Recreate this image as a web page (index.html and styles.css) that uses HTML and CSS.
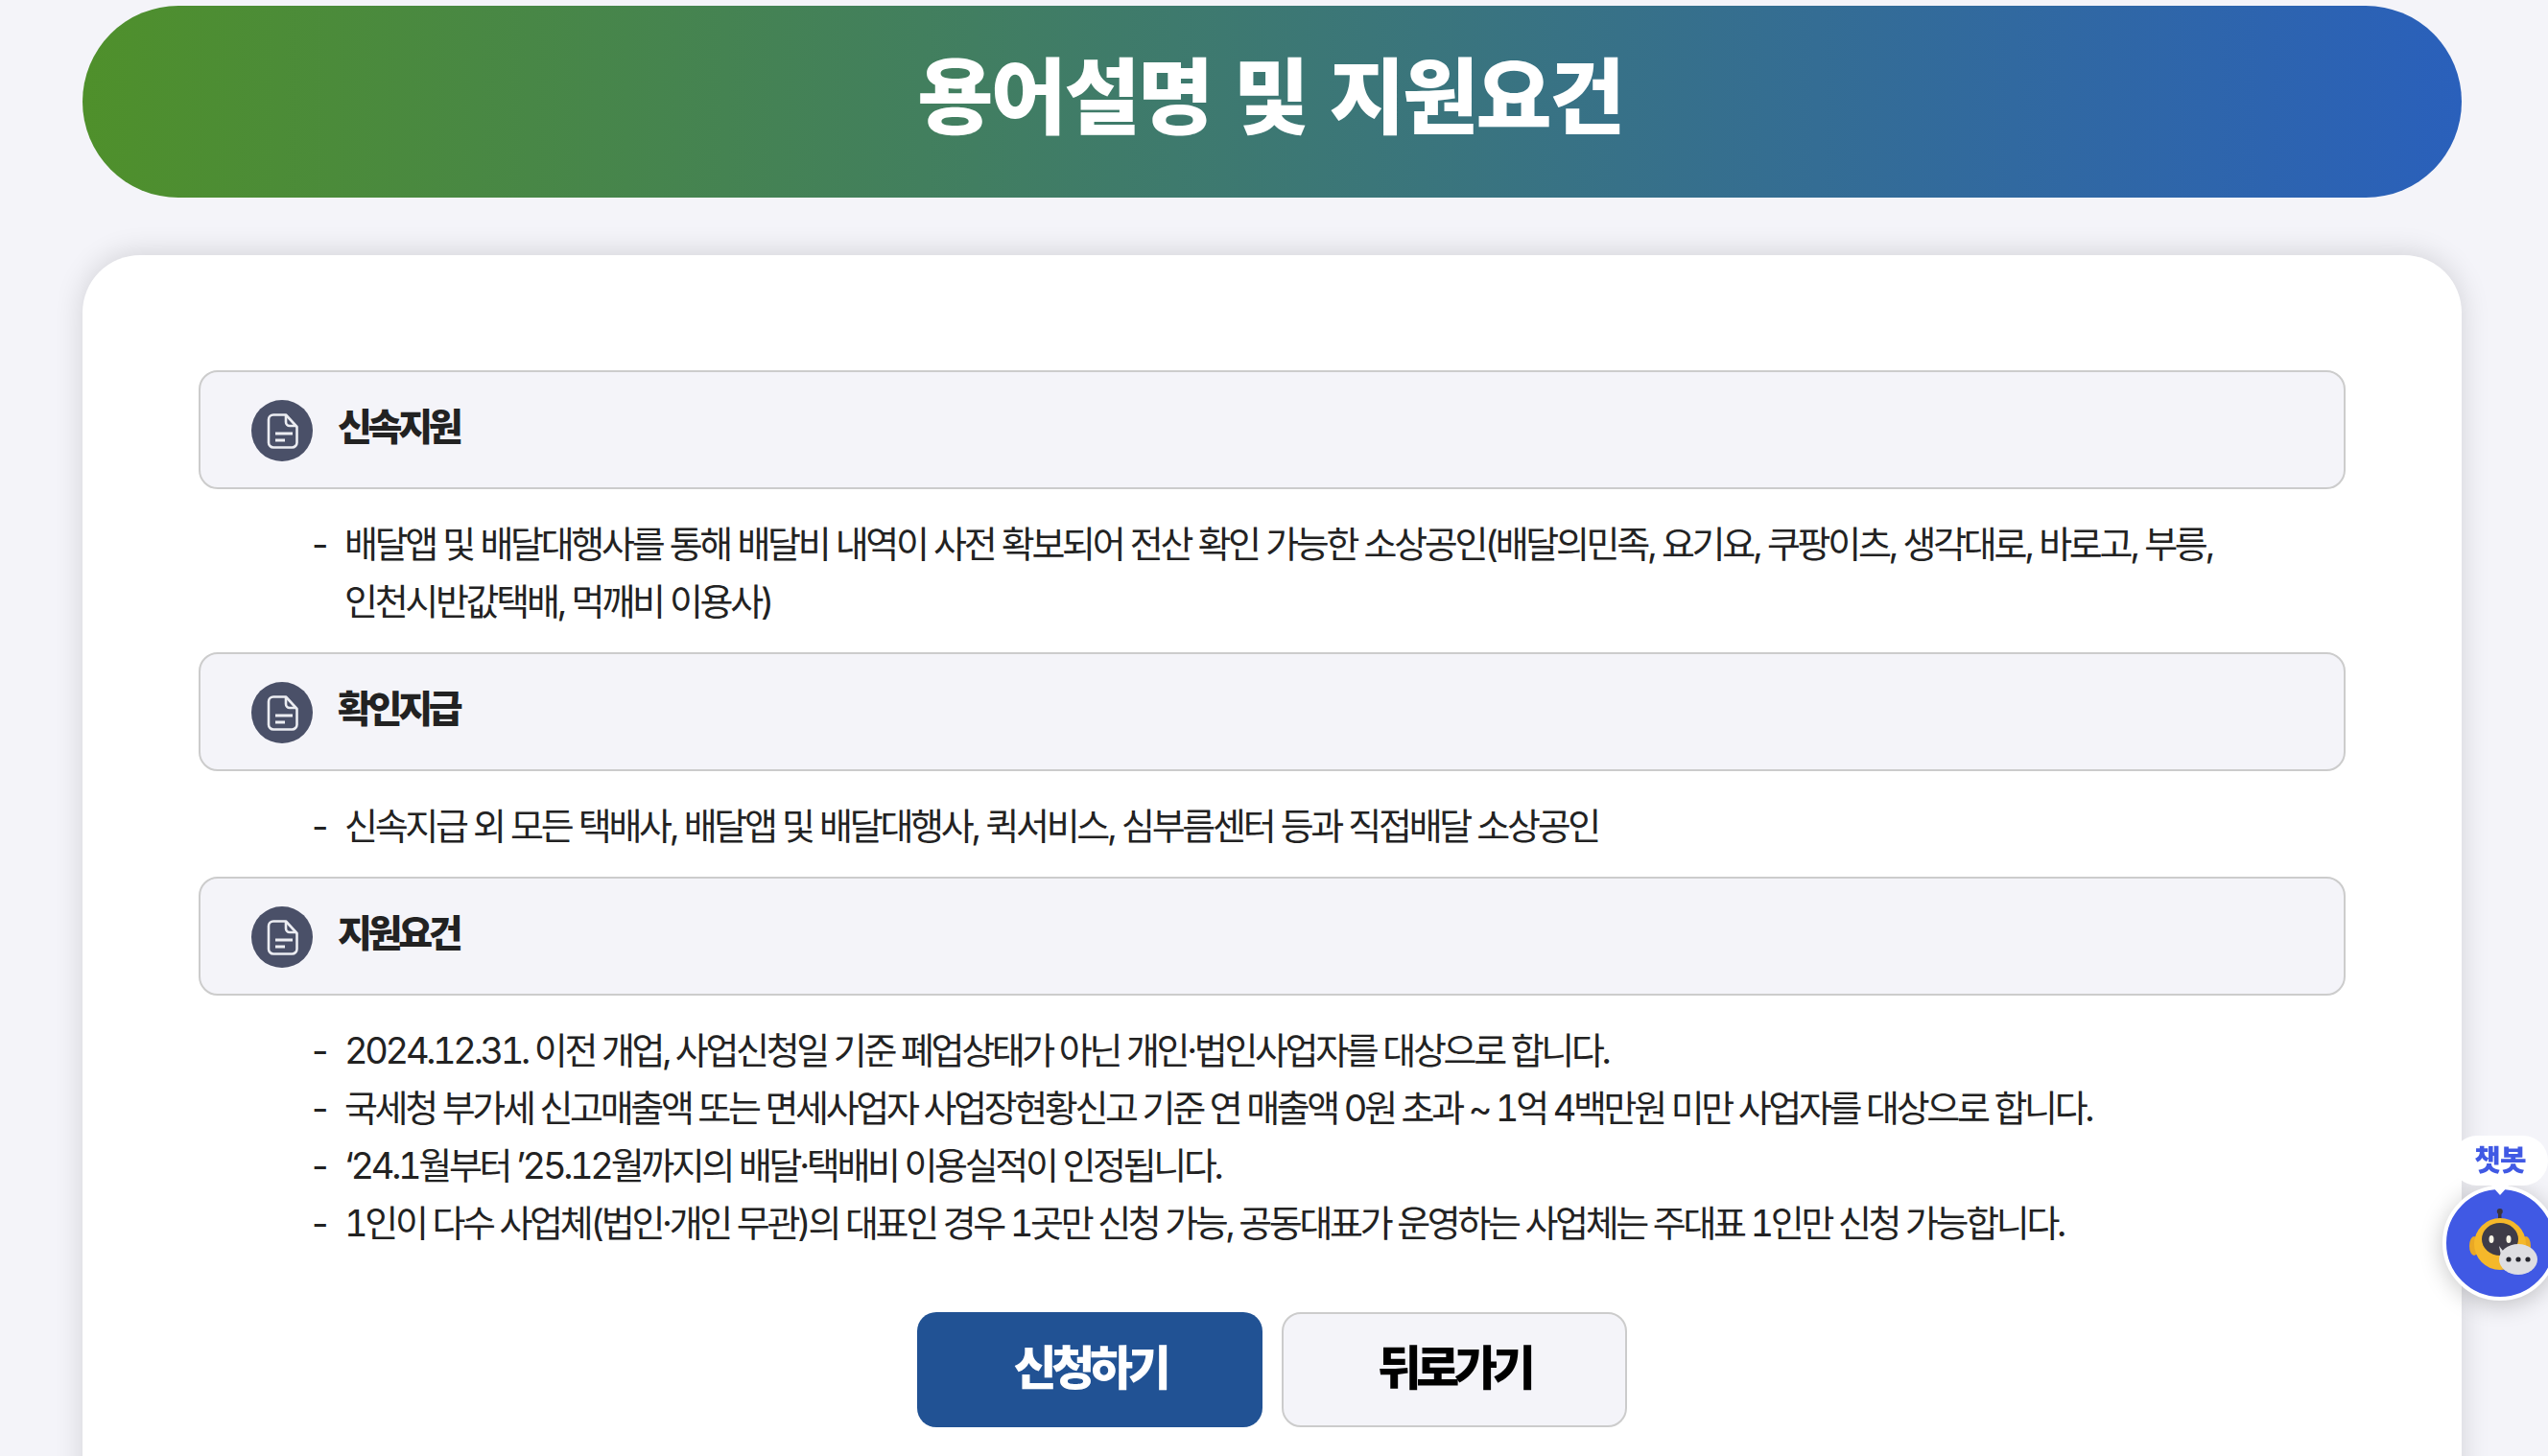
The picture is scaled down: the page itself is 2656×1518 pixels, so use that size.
FILE: index.html
```html
<!DOCTYPE html>
<html lang="ko">
<head>
<meta charset="utf-8">
<title>용어설명 및 지원요건</title>
<link rel="stylesheet" href="styles.css">
</head>
<body>
<div class="page">
  <h1 class="banner">용어설명 및 지원요건</h1>
  <main class="card">
    <section class="head-box">
      <svg class="doc-icon" viewBox="0 0 64 64"><circle cx="32" cy="32" r="32" fill="#4a5068"/><path d="M23 15.5h13l11.5 12.5v16.500a5 5 0 0 1-5 5H23a5 5 0 0 1-5-5v-24a5 5 0 0 1 5-5z" fill="none" stroke="#ecedf2" stroke-width="2.6" stroke-linejoin="round"/><path d="M36 16v7a4 4 0 0 0 4 4h7" fill="none" stroke="#ecedf2" stroke-width="2.6"/><path d="M25 35h18M25 42h10" stroke="#ecedf2" stroke-width="3"/></svg>
      <h2 class="head-title">신속지원</h2>
    </section>
    <ul class="list">
      <li class="item"><span class="dash">-</span><span class="item-text">배달앱 및 배달대행사를 통해 배달비 내역이 사전 확보되어 전산 확인 가능한 소상공인(배달의민족, 요기요, 쿠팡이츠, 생각대로, 바로고, 부릉, 인천시반값택배, 먹깨비 이용사)</span></li>
    </ul>
    <section class="head-box">
      <svg class="doc-icon" viewBox="0 0 64 64"><circle cx="32" cy="32" r="32" fill="#4a5068"/><path d="M23 15.5h13l11.5 12.5v16.500a5 5 0 0 1-5 5H23a5 5 0 0 1-5-5v-24a5 5 0 0 1 5-5z" fill="none" stroke="#ecedf2" stroke-width="2.6" stroke-linejoin="round"/><path d="M36 16v7a4 4 0 0 0 4 4h7" fill="none" stroke="#ecedf2" stroke-width="2.6"/><path d="M25 35h18M25 42h10" stroke="#ecedf2" stroke-width="3"/></svg>
      <h2 class="head-title">확인지급</h2>
    </section>
    <ul class="list">
      <li class="item"><span class="dash">-</span><span class="item-text">신속지급 외 모든 택배사, 배달앱 및 배달대행사, 퀵서비스, 심부름센터 등과 직접배달 소상공인</span></li>
    </ul>
    <section class="head-box">
      <svg class="doc-icon" viewBox="0 0 64 64"><circle cx="32" cy="32" r="32" fill="#4a5068"/><path d="M23 15.5h13l11.5 12.5v16.500a5 5 0 0 1-5 5H23a5 5 0 0 1-5-5v-24a5 5 0 0 1 5-5z" fill="none" stroke="#ecedf2" stroke-width="2.6" stroke-linejoin="round"/><path d="M36 16v7a4 4 0 0 0 4 4h7" fill="none" stroke="#ecedf2" stroke-width="2.6"/><path d="M25 35h18M25 42h10" stroke="#ecedf2" stroke-width="3"/></svg>
      <h2 class="head-title">지원요건</h2>
    </section>
    <ul class="list list-last">
      <li class="item"><span class="dash">-</span><span class="item-text">2024.12.31. 이전 개업, 사업신청일 기준 폐업상태가 아닌 개인·법인사업자를 대상으로 합니다.</span></li>
      <li class="item"><span class="dash">-</span><span class="item-text">국세청 부가세 신고매출액 또는 면세사업자 사업장현황신고 기준 연 매출액 0원 초과 ~ 1억 4백만원 미만 사업자를 대상으로 합니다.</span></li>
      <li class="item"><span class="dash">-</span><span class="item-text">‘24.1월부터 ’25.12월까지의 배달·택배비 이용실적이 인정됩니다.</span></li>
      <li class="item"><span class="dash">-</span><span class="item-text">1인이 다수 사업체(법인·개인 무관)의 대표인 경우 1곳만 신청 가능, 공동대표가 운영하는 사업체는 주대표 1인만 신청 가능합니다.</span></li>
    </ul>
    <div class="actions">
      <button class="btn btn-primary">신청하기</button>
      <button class="btn btn-secondary">뒤로가기</button>
    </div>
  </main>
</div>
<aside class="chatbot">
  <div class="chat-label">챗봇</div>
  <div class="chat-circle">
    <svg class="chat-robot" viewBox="0 0 112 112">
      <rect x="54" y="22" width="3.5" height="9" fill="#3b3540"/><circle cx="55.8" cy="23" r="3" fill="#3b3540"/>
      <ellipse cx="29" cy="59" rx="5" ry="10" fill="#e9a825"/><ellipse cx="83" cy="59" rx="5" ry="10" fill="#e9a825"/>
      <circle cx="56" cy="57" r="27" fill="#f5b82a"/>
      <ellipse cx="56" cy="52" rx="19" ry="17" fill="#3f3c48"/>
      <ellipse cx="47" cy="52" rx="2.5" ry="4" fill="#f6f3e6"/><ellipse cx="65" cy="52" rx="2.5" ry="4" fill="#f6f3e6"/>
      <path d="M55 59l8 10h-6z" fill="#dedee2"/>
      <ellipse cx="75" cy="73" rx="20" ry="16" fill="#dedee2"/>
      <circle cx="65" cy="73" r="2.6" fill="#26262e"/><circle cx="75" cy="73" r="2.6" fill="#26262e"/><circle cx="85" cy="73" r="2.6" fill="#26262e"/>
    </svg>
  </div>
</aside>
</body>
</html>
```

FILE: styles.css
```css
* { box-sizing: border-box; }
html, body { margin: 0; height: 100%; overflow: hidden; }
body {
  background: #f4f4f9;
  font-family: Inter, "Noto Sans CJK KR", "Noto Sans", sans-serif;
  font-kerning: none;
  color: #222;
}
.page { padding: 6px 90px 0 86px; }
.banner {
  margin: 0 0 60px;
  height: 200px;
  padding: 0 4px 22px 0;
  border-radius: 100px;
  background: linear-gradient(90deg, #4f902b 0%, #2a60bb 100%);
  color: #fff;
  font-size: 86px;
  font-weight: 800;
  letter-spacing: -0.03em;
  word-spacing: 7px;
  display: flex;
  align-items: center;
  justify-content: center;
}
.card {
  background: #fff;
  border-radius: 60px;
  padding: 120px 121px 60px;
  box-shadow: 0 -2px 30px rgba(0, 0, 0, 0.14);
  min-height: 1400px;
}
.head-box {
  display: flex;
  align-items: center;
  gap: 26px;
  height: 124px;
  padding: 2px 0 0 53px;
  background: #f4f4f9;
  border: 2px solid #ccc;
  border-radius: 20px;
}
.doc-icon { width: 64px; height: 64px; flex: none; }
.head-title {
  margin: 0 0 14px;
  font-size: 39px;
  font-weight: 800;
  letter-spacing: -0.11em;
  color: #222;
}
.list {
  list-style: none;
  margin: 0;
  padding: 27px 120px 23px 118px;
  font-size: 38px;
  line-height: 60px;
  letter-spacing: -0.087em;
}
.list-last {
  padding-bottom: 63px;
  letter-spacing: -0.088em;
  font-variant-numeric: tabular-nums;
}
.item { display: flex; }
.dash { width: 34px; flex: none; font-variant-numeric: normal; }
.actions { display: flex; justify-content: center; gap: 20px; }
.btn {
  width: 360px;
  height: 120px;
  border-radius: 20px;
  font-family: inherit;
  font-size: 49px;
  font-weight: 800;
  letter-spacing: -0.11em;
  padding: 0 0 12px;
}
.btn-primary { background: #215294; color: #fff; border: 0; }
.btn-secondary { background: #f4f4f9; color: #000; border: 2px solid #ccc; }
.chatbot {
  position: fixed;
  right: -6px;
  top: 1184px;
  width: 112px;
}
.chat-label {
  position: relative;
  z-index: 1;
  width: 100px;
  height: 52px;
  margin: 0 0 0 6px;
  padding-bottom: 6px;
  background: #fff;
  border-radius: 26px;
  color: #4059e4;
  font-size: 30px;
  font-weight: 800;
  letter-spacing: -0.03em;
  display: flex;
  align-items: center;
  justify-content: center;
}
.chat-label::after {
  content: "";
  position: absolute;
  left: 41px;
  bottom: -10px;
  border: 9px solid transparent;
  border-top-color: #fff;
  border-bottom: 0;
  border-top-width: 10px;
}
.chat-circle {
  width: 120px;
  height: 120px;
  margin-left: -4px;
  border-radius: 50%;
  background: #4059e4;
  border: 4px solid #fff;
  box-shadow: 0 4px 24px rgba(0, 0, 0, 0.22);
}
.chat-robot { display: block; width: 112px; height: 112px; }
```
